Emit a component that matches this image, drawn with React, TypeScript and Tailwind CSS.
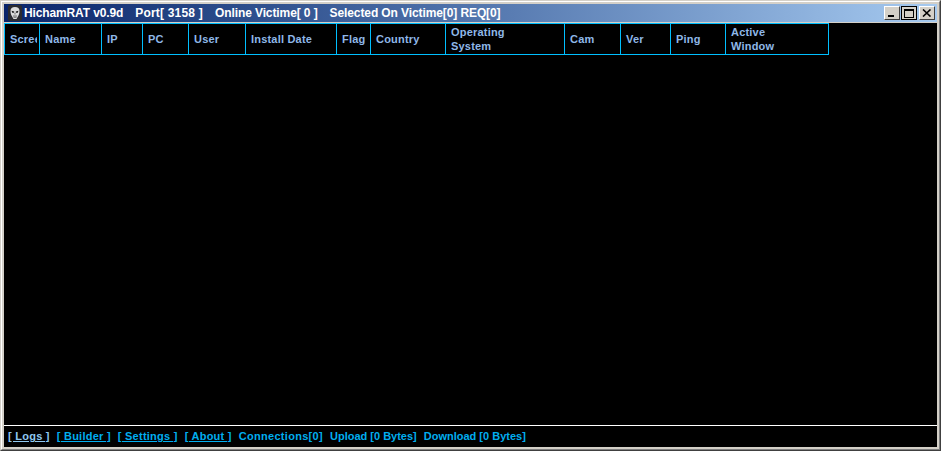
const columns = [
  { label: "Scree", width: "w-[35px]" },
  { label: "Name", width: "w-[62px]" },
  { label: "IP", width: "w-[41px]" },
  { label: "PC", width: "w-[46px]" },
  { label: "User", width: "w-[57px]" },
  { label: "Install Date", width: "w-[91px]" },
  { label: "Flag", width: "w-[34px]" },
  { label: "Country", width: "w-[75px]" },
  { label: "Operating System", width: "w-[119px]" },
  { label: "Cam", width: "w-[56px]" },
  { label: "Ver", width: "w-[50px]" },
  { label: "Ping", width: "w-[55px]" },
  { label: "Active Window", width: "w-[103px]" },
];

const Skull = () => (
  <div className="w-[14px] h-[16px] bg-[#2b2b30] rounded-[2px] flex items-center justify-center shrink-0">
    <svg width="12" height="14" viewBox="0 0 12 14">
      <path d="M6 1C3 1 1.5 2.6 1.5 5c0 2 .5 3.6 1.3 5L4.5 13h3l1.7-3c.8-1.4 1.3-3 1.3-5C10.500 2.600 9 1 6 1z" fill="#dcdcdc" />
      <path d="M2.6 4.800L5.200 5.600V6.700H3.200zM9.400 4.800L6.800 5.600V6.700H8.800z" fill="#1a1a1a" />
      <rect x="5.500" y="7" width="1" height="1.500" fill="#666" />
      <path d="M4 10h4M4.500 11.300h3" stroke="#444" strokeWidth="0.700" />
    </svg>
  </div>
);

const WinButton = ({ children }: { children: React.ReactNode }) => (
  <div className="w-[16px] h-[14px] bg-[#d4d0c8] border border-t-white border-l-white border-r-[#404040] border-b-[#404040] flex items-center justify-center">
    {children}
  </div>
);

const links = ["[ Logs ]", "[ Builder ]", "[ Settings ]", "[ About ]"];

const App = () => {
  return (
    <div className="w-[941px] h-[451px] overflow-hidden border border-t-[#d4d0c8] border-l-[#d4d0c8] border-r-[#404040] border-b-[#404040] font-['Liberation_Sans',Arial,sans-serif]">
      <div className="h-full border border-t-white border-l-white border-r-[#808080] border-b-[#808080] bg-[#d4d0c8] p-[2px] flex flex-col">
        {/* title bar */}
        <div className="h-[18px] shrink-0 flex items-center pl-[4px] pr-[2px] bg-gradient-to-r from-[#0a246a] to-[#a6caf0] text-white text-[12px] font-bold">
          <Skull />
          <span className="ml-[2px] whitespace-pre tracking-[-0.13px]">HichamRAT v0.9d</span>
          <span className="ml-[12px] whitespace-pre tracking-[0.2px]">Port[ 3158 ]</span>
          <span className="ml-[12px] whitespace-pre tracking-[-0.1px]">Online Victime[ 0 ]</span>
          <span className="ml-[12px] whitespace-pre tracking-[-0.1px]">Selected On Victime[0] REQ[0]</span>
          <div className="ml-auto flex items-center">
            <WinButton>
              <div className="w-[6px] h-[2px] bg-black mt-[6px] mr-[2px]" />
            </WinButton>
            <div className="w-[16px] h-[14px] bg-[#d4d0c8] border border-black ml-[1px] flex items-center justify-center">
              <div className="w-[10px] h-[9px] border border-black border-t-2" />
            </div>
            <div className="ml-[2px]">
              <WinButton>
                <svg width="10" height="8" viewBox="0 0 10 8">
                  <path d="M1 0.5L8.5 7.5M8.5 0.5L1 7.5" stroke="#000" strokeWidth="1.6" />
                </svg>
              </WinButton>
            </div>
          </div>
        </div>

        {/* list */}
        <div className="flex-1 bg-black mt-[1px] flex flex-col min-h-0">
          <div className="flex flex-1 items-start">
            <div className="flex h-[32px] border border-[#00bfff] border-r-0 text-[#8fb8e8] text-[11px] font-bold tracking-[0.2px] leading-[14px]">
              {columns.map((col, i) => (
                <div
                  key={col.label}
                  className={`${col.width} shrink-0 border-r border-[#00bfff] pl-[5px] pr-[20px] flex items-center overflow-hidden first:pr-0`}
                >
                  <span className={i === 0 ? "w-[27px] overflow-hidden whitespace-nowrap" : ""}>{col.label}</span>
                </div>
              ))}
            </div>
          </div>

          {/* status */}
          <div className="h-[22px] shrink-0 border-t border-white flex items-center pl-[4px] text-[11px] font-bold text-[#00aeef] whitespace-pre">
            {links.map((link, i) => (
              <span
                key={link}
                className={`underline mr-[7px] tracking-[0.25px] ${i === 0 ? "text-[#8fc8f0]" : ""}`}
              >
                {link}
              </span>
            ))}
            <span className="mr-[7px] tracking-[0.3px]">Connections[0]</span>
            <span className="mr-[7px]">Upload [0 Bytes]</span>
            <span>Download [0 Bytes]</span>
          </div>
        </div>
      </div>
    </div>
  );
};

export default App;
